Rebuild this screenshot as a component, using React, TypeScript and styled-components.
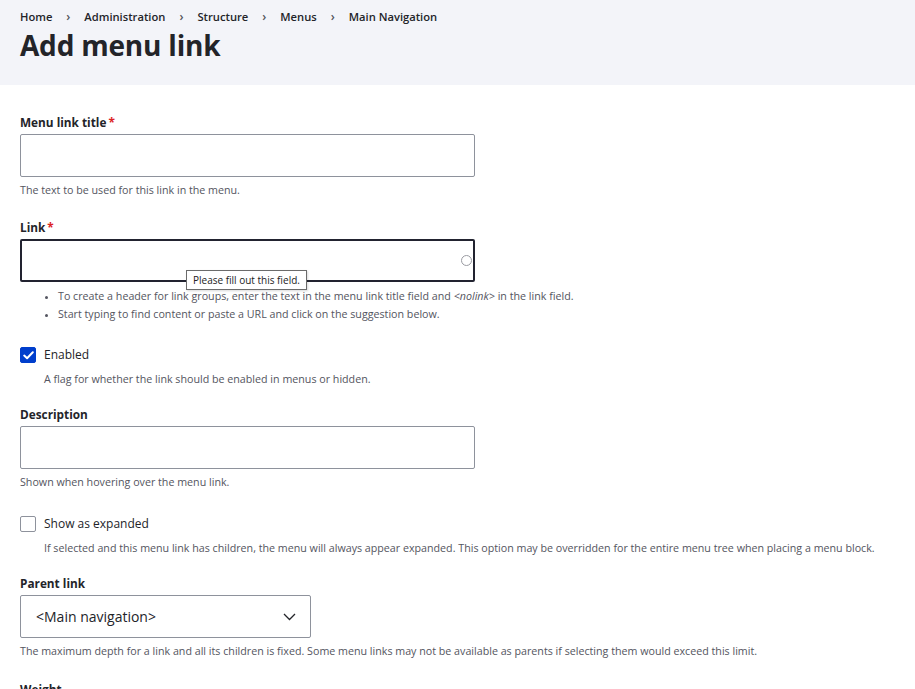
import React from "react";
import styled, { createGlobalStyle } from "styled-components";

const Global = createGlobalStyle`
  html, body { margin: 0; padding: 0; background: #fff; }
  body { font-family: "Open Sans", "Noto Sans", sans-serif; color: #232429; }
  * { box-sizing: border-box; }
`;

const Header = styled.header`
  background: #f3f4f9;
  padding: 8px 20px 0;
  height: 85px;
`;

const Crumbs = styled.nav`
  display: flex;
  align-items: center;
  font-size: 11.2px;
  font-weight: 600;
  color: #232429;
  height: 17px;
`;

const Sep = styled.span`
  width: 32px;
  text-align: center;
  font-size: 12px;
  color: #55565b;
`;

const Title = styled.h1`
  margin: 2px 0 0;
  font-size: 28px;
  font-weight: 700;
  line-height: 36px;
  letter-spacing: -0.2px;
`;

const Main = styled.main`
  padding: 29px 20px 0;
  display: flex;
  flex-direction: column;
`;

const Field = styled.div<{ $mb?: number }>`
  margin-bottom: ${(p) => p.$mb ?? 20}px;
  position: relative;
`;

const Label = styled.div`
  font-size: 11.8px;
  font-weight: 700;
  line-height: 16px;
  margin-bottom: 4px;
`;

const Req = styled.span`
  color: #dc2323;
  margin-left: 2px;
`;

const Input = styled.div<{ $focus?: boolean }>`
  width: 455px;
  height: 43px;
  border: ${(p) => (p.$focus ? "2px solid #222330" : "1px solid #8e929c")};
  border-radius: 2px;
  background: #fff;
  position: relative;
`;

const Throbber = styled.span`
  position: absolute;
  right: 1px;
  top: 14px;
  width: 11px;
  height: 11px;
  border: 1.5px solid #9a9ba2;
  border-radius: 50%;
`;

const Tooltip = styled.div`
  position: absolute;
  left: 164px;
  top: 29px;
  padding: 2px 6px;
  background: #fff;
  border: 1px solid #6b6b6b;
  font-size: 10px;
  line-height: 14px;
  color: #222;
  box-shadow: 1px 1px 2px rgba(0,0,0,0.15);
  white-space: nowrap;
  z-index: 2;
`;

const Desc = styled.div<{ $indent?: boolean }>`
  font-size: 10.7px;
  line-height: 16px;
  color: #545560;
  margin-top: ${(p) => (p.$indent ? "7px" : "5px")};
  margin-left: ${(p) => (p.$indent ? "24px" : "0")};
  white-space: nowrap;
`;

const List = styled.ul`
  margin: 5px 0 0;
  padding: 0 0 0 38px;
  font-size: 10.7px;
  line-height: 18px;
  color: #545560;
  li::marker { font-size: 9px; }
`;

const CheckRow = styled.label`
  display: flex;
  align-items: center;
  gap: 8px;
  font-size: 12px;
  line-height: 18px;
  color: #232429;
`;

const Box = styled.span<{ $checked?: boolean }>`
  width: 16px;
  height: 16px;
  border-radius: 2px;
  border: 1px solid ${(p) => (p.$checked ? "#003ecc" : "#8e929c")};
  background: ${(p) => (p.$checked ? "#003ecc" : "#fff")};
  display: flex;
  align-items: center;
  justify-content: center;
`;

const Select = styled.div`
  width: 291px;
  height: 43px;
  border: 1px solid #8e929c;
  border-radius: 2px;
  display: flex;
  align-items: center;
  justify-content: space-between;
  padding: 0 14px 0 15px;
  font-size: 14px;
  color: #232429;
`;

const crumbs = ["Home", "Administration", "Structure", "Menus", "Main Navigation"];

export default function App() {
  return (
    <>
      <Global />
      <Header>
        <Crumbs>
          {crumbs.map((c, i) => (
            <React.Fragment key={c}>
              {i > 0 && <Sep>›</Sep>}
              <span>{c}</span>
            </React.Fragment>
          ))}
        </Crumbs>
        <Title>Add menu link</Title>
      </Header>
      <Main>
        <Field $mb={21}>
          <Label>Menu link title<Req>*</Req></Label>
          <Input />
          <Desc>The text to be used for this link in the menu.</Desc>
        </Field>
        <Field $mb={23}>
          <Label>Link<Req>*</Req></Label>
          <Input $focus>
            <Throbber />
            <Tooltip>Please fill out this field.</Tooltip>
          </Input>
          <List>
            <li>To create a header for link groups, enter the text in the menu link title field and <i>&lt;nolink&gt;</i> in the link field.</li>
            <li>Start typing to find content or paste a URL and click on the suggestion below.</li>
          </List>
        </Field>
        <Field $mb={19}>
          <CheckRow>
            <Box $checked>
              <svg width="11" height="9" viewBox="0 0 11 9">
                <path d="M1.2 4.6 L4.1 7.3 L9.8 1.3" fill="none" stroke="#fff" strokeWidth="2" strokeLinecap="round" strokeLinejoin="round" />
              </svg>
            </Box>
            Enabled
          </CheckRow>
          <Desc $indent>A flag for whether the link should be enabled in menus or hidden.</Desc>
        </Field>
        <Field $mb={25}>
          <Label>Description</Label>
          <Input />
          <Desc>Shown when hovering over the menu link.</Desc>
        </Field>
        <Field $mb={19}>
          <CheckRow>
            <Box />
            Show as expanded
          </CheckRow>
          <Desc $indent>If selected and this menu link has children, the menu will always appear expanded. This option may be overridden for the entire menu tree when placing a menu block.</Desc>
        </Field>
        <Field $mb={22}>
          <Label>Parent link</Label>
          <Select>
            <span>&lt;Main navigation&gt;</span>
            <svg width="13" height="8" viewBox="0 0 13 8">
              <path d="M1 1 L6.5 6.5 L12 1" fill="none" stroke="#232429" strokeWidth="1.3" />
            </svg>
          </Select>
          <Desc>The maximum depth for a link and all its children is fixed. Some menu links may not be available as parents if selecting them would exceed this limit.</Desc>
        </Field>
        <Field>
          <Label>Weight</Label>
        </Field>
      </Main>
    </>
  );
}
